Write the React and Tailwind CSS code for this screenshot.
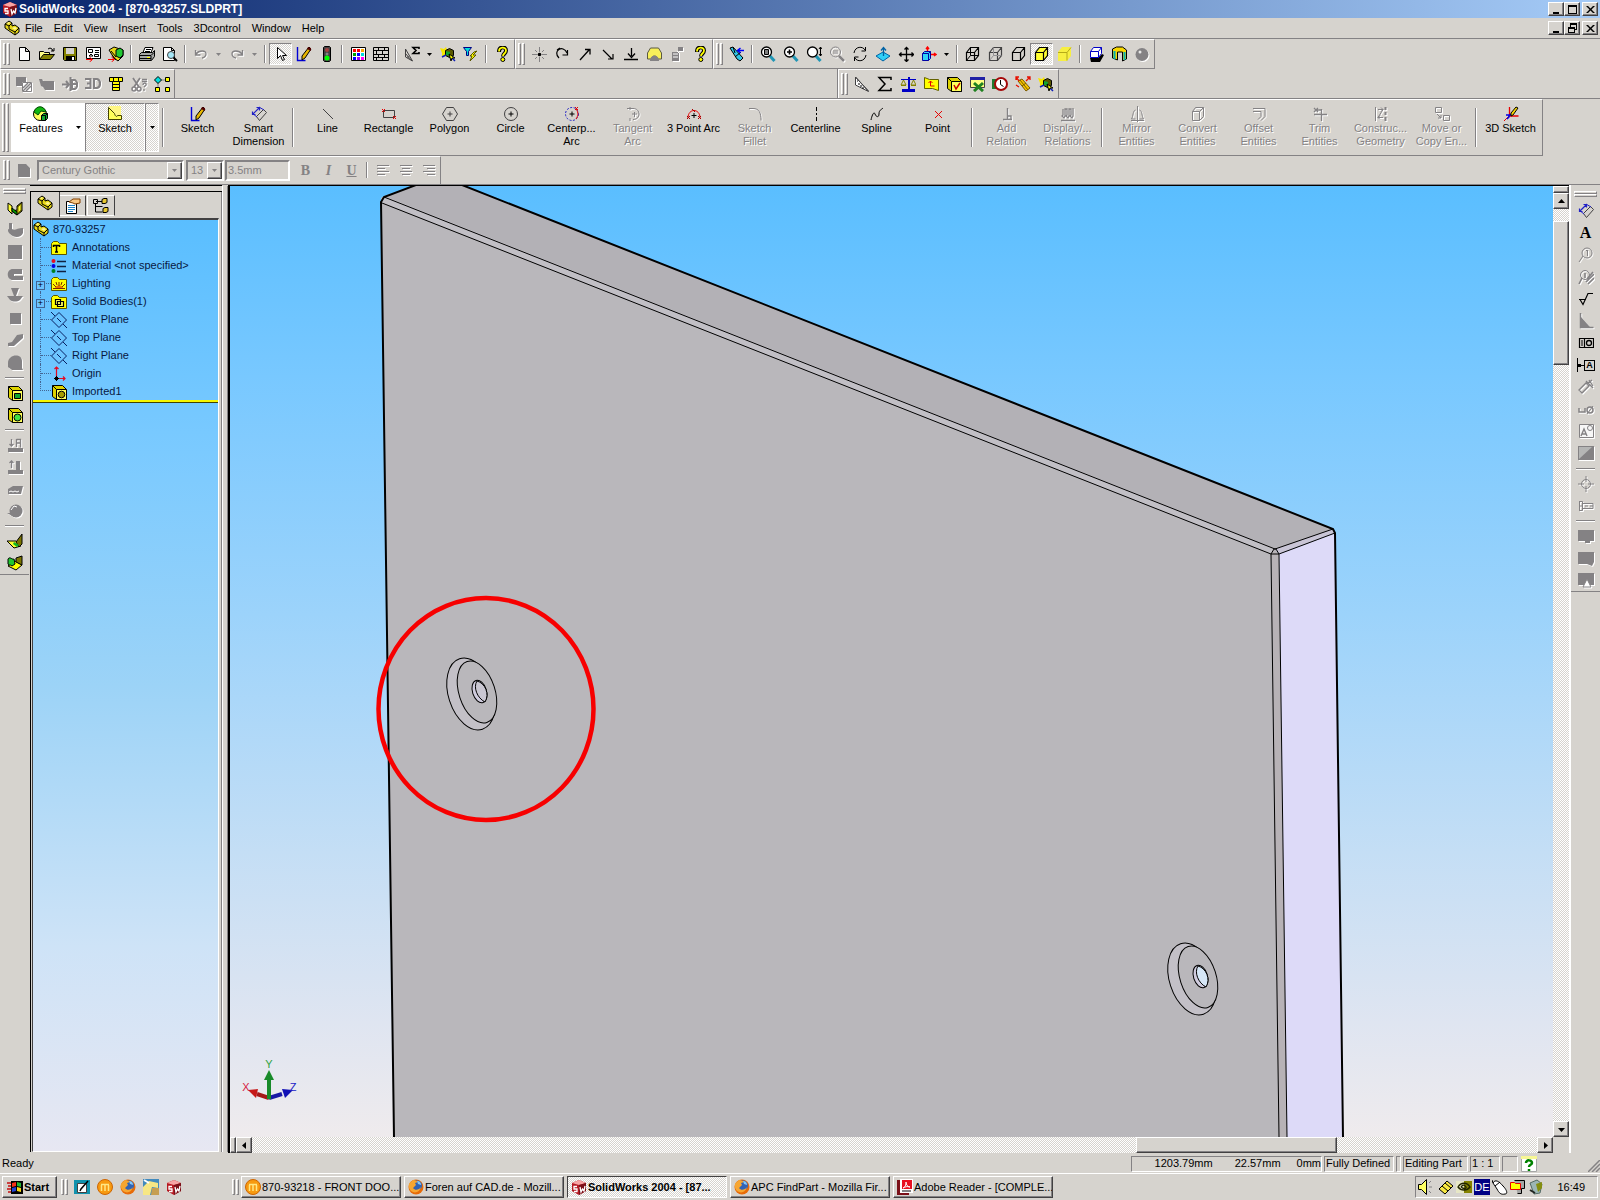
import React from 'react';

const G = '#848284';
const Y = '#ffff00';

const P = ({ d, f = 'none', s = '#000', w = 1 }) => <path d={d} fill={f} stroke={s} strokeWidth={w} />;
const F = ({ d, c }) => <path d={d} fill={c} />;

const magnifier = (
    <>
        <P d="M10 10l4.500 5" s="#2196b5" w={3} />
        <circle cx="6.500" cy="6" r="5" fill="#fff" stroke="#000" strokeWidth="1.300" />
    </>
);

const cube = (fill, stroke, hidden) => (
    <>
        <P d="M1.500 6.500h8v8h-8zM1.500 6.500l4-5h8v8l-4 5M9.500 6.500l4-5" f={fill} s={stroke} w={1.200} />
        {hidden && <P d="M5.500 1.500v8h8M5.500 9.500l-4 5" s={hidden} />}
    </>
);

const part = (
    <>
        <P d="M1 4l4-3 3 2v3l3-1 4 3v4l-4 3-10-7z" f="#e7d718" />
        <P d="M1 4l4 2 3-3M5 6v3l6 3 4-4M11 12v3" s="#000" />
        <F d="M3 3l2-1 1 1-2 1zM8 8l3-1 2 1-2 2z" c="#fff794" />
    </>
);

const folder = (
    <P d="M.5 14.500v-11l2-2h4l2 2h7v11z" f={Y} s="#5a5500" />
);

const plane = (
    <>
        <P d="M8 .5l7.500 7.500-7.500 7.500-7.500-7.500zM6 6l4 4" s="#082163" />
        <P d="M0 0l4 4M12 12l4 4" s="#082163" />
    </>
);

const yellowBox = (
    <>
        <P d="M1.500 1.500h10l4 4v10h-10l-4-3z" f="#ded300" />
        <P d="M5.500 5.500h10v10h-10zM1.500 1.500l4 4" f="#ffff5a" />
    </>
);

const help = (
    <>
        <P d="M5 6c0-6 7-6 7-1.500 0 3-3 3-3 6" w={4} />
        <P d="M5 5.500c0-5 7-5 7-1 0 3-3 3-3 5.500" s={Y} w={1.800} />
        <circle cx="8.800" cy="13.500" r="2" fill={Y} stroke="#000" />
    </>
);

const swCube = (
    <>
        <F d="M1 4l7-3 7 3v8l-7 4-7-4z" c="#b51821" />
        <F d="M1 4l7-3 7 3-7 2z" c="#f7a5a5" />
        <F d="M8 6l7-2v8l-7 4z" c="#7b1018" />
        <P d="M6 7.500h-3v2.500h3v2.500h-3M9 8l1 5 1.500-3 1.500 2 1-5" s="#fff" w={1.300} />
    </>
);

const firefox = (
    <>
        <circle cx="8" cy="8" r="7.500" fill="#e76b08" />
        <circle cx="9" cy="6.500" r="5" fill="#3163b5" />
        <F d="M5 1c2 0 4 1 5 2l-3 1 1 2-3 3c2 3 6 2 8-1-1 5-6 7-10 4-3-3-3-8 0-9z" c="#f7a631" />
        <F d="M9 2c3 0 4 2 4 4l-3-1z" c="#84c7f7" />
    </>
);

const orange = (
    <>
        <circle cx="8" cy="8" r="7.500" fill="#f79a10" stroke="#ce6500" />
        <P d="M4.500 12v-6M8 6v6M11.500 6v6M4 5.500h8" s="#ffe784" w={1.500} />
    </>
);

const explode = (
    <>
        <F d="M0 2l4 1 2-2 1 3 3-1-2 4 1 3-4-1-3 2v-4z" c="#f7e700" />
        <P d="M5.500 4.500l4-2 4 2v5l-4 2-4-2z" f="#5a5900" />
        <F d="M6 5l4 1v4l-4-1z" c="#10a631" />
        <P d="M2 11l4-2M12 12l3 3" s="#1020b5" w={1.500} />
        <P d="M9 8l6 4-3 0-1 3z" f={Y} />
    </>
);

const dim = (c) => (
    <>
        <P d="M5.500 10.500l7-7 3 3-7 8z" s="#424142" />
        <P d="M1.500 8.500l7-7M1.500 5.500v3h3M5.500 1.500h3v3" s={c} w={1.200} />
        <P d="M1 7l5 4M8 1l5 3" s={c} />
    </>
);

const surface = (
    <>
        <P d="M1 3l4 3v8l-4-4z" f="#ffff31" />
        <P d="M5 11l5 4 5-4v-9l-5 4v4z" f="#7b7500" />
        <P d="M5 8l5 4v3l-5-4z" f="#00a600" />
        <P d="M11 7l3-3v6l-3 3z" f="#ffff31" s="#7b7500" />
    </>
);

const ICONS = {
    sw: swCube,
    part,
    new: <P d="M3.500 1.500h6l4 4v9h-10zM9.500 1.500v4h4" f="#fff" />,
    open: (
        <>
            <P d="M.5 13.500v-8h4l1 1h5v2" f="#ffff84" />
            <P d="M.5 13.500l4-5h11l-4 5z" f="#848200" />
            <P d="M9 3l2-1 2 1 1 2M12 5h3v-3" />
        </>
    ),
    save: (
        <>
            <P d="M1.500 1.500h13v13h-12l-1-1z" f="#848200" />
            <F d="M4 2h8v6h-8z" c="#d6d3ce" />
            <F d="M4 10h9v5h-9z" c="#000" />
            <F d="M10 11h2v3h-2z" c="#fff" />
        </>
    ),
    drawing: (
        <>
            <P d="M1.500 1.500h14v11h-14z" f="#fff" />
            <P d="M3.500 3.500h4v3h-4zM10 4.500h4M10 6.500h4M9.500 8.500h4v2h-4zM4 10l2-2 2 2z" />
            <P d="M1 13.500h6M4.500 11l3 2.500-3 2.500" s="#ff0000" />
        </>
    ),
    assembly: (
        <>
            <P d="M1 4l5-3 9 3v6l-5 5-4-3z" f="#e7d718" />
            <P d="M8 4l4-2 3 2v5l-3 3-4-2z" f="#21c731" />
            <P d="M3 5l5 6M4 9l4 5" />
            <P d="M0 13.500h6M3.500 11l3 2.500-3 2.500" s="#ff0000" />
        </>
    ),
    print: (
        <>
            <P d="M4 6.500l2-5h8l-2 5" f="#fff" />
            <P d="M.5 8.500l2-2h11l2-2v6l-3 4h-12z" f="#a5a6a5" />
            <P d="M1 9.500h11l3-3M1 12.500h11M12 10v4M7 3.500h5M6 5.500h5" />
            <F d="M8 11h3v1h-3z" c={Y} />
        </>
    ),
    preview: (
        <>
            <P d="M1.500 1.500h8l3 3v10h-11zM9.500 1.500v3h3" f="#fff" />
            <circle cx="9" cy="9" r="3.500" fill="#a5e7f7" stroke="#424142" />
            <P d="M11.500 11.500l3.500 3.500" w={2} />
        </>
    ),
    undo: <P d="M2.500 4v5h5M3 8c3-4 10-4 10 0 0 2-2 4-4 4" s={G} w={1.300} />,
    redo: <P d="M13.500 4v5h-5M13 8c-3-4-10-4-10 0 0 2 2 4 4 4" s={G} w={1.300} />,
    select: <P d="M4.500 1.500v11l3-3 2 5 2-1-2-4h4z" f="#fff" />,
    sketch: (
        <>
            <P d="M1.500 1v13.500h8" s="#0000d6" w={1.400} />
            <P d="M13 1l2 2-6 9-3 2v-4z" f="#e7b600" />
            <F d="M12 1l3 1v3l-4-2z" c="#520000" />
        </>
    ),
    light: (
        <>
            <P d="M5.500.5h5l1 1v13l-1 1h-5l-1-1v-13z" f="#424142" />
            <circle cx="8" cy="4" r="2" fill="#a54142" />
            <circle cx="8" cy="8" r="1.500" fill="#848284" />
            <circle cx="8" cy="12" r="2.500" fill="#00ff00" />
        </>
    ),
    colors: (
        <>
            <P d="M1.500 1.500h14v13h-14z" f="#fff" />
            <F d="M3 3h3v3h-3zM7 3h3v3h-3z" c="#ff0000" />
            <F d="M11 3h3v3h-3z" c="#ffaa00" />
            <F d="M3 7h3v3h-3z" c="#00a600" />
            <F d="M7 7h3v3h-3zM3 11h3v3h-3z" c="#0000ff" />
            <F d="M11 7h3v3h-3z" c="#00dede" />
            <F d="M7 11h3v3h-3z" c="#9c00ff" />
            <F d="M11 11h3v3h-3z" c="#ff00ff" />
        </>
    ),
    bricks: <P d="M.5 1.500h15v13h-15zM0 4.500h15M0 8.500h15M0 11.500h15M5.500 2v2M11.500 2v2M3.500 5v3M9.500 5v3M5.500 9v2M11.500 9v2M3.500 12v2M9.500 12v2" />,
    measure: (
        <>
            <P d="M1.500 3v8l7 4-7-12M1 7l7 8M4 10v2" s="#424142" />
            <P d="M15 3v-1.500h-6l3 3-3 3h6v-1.500" w={1.600} />
        </>
    ),
    explode,
    filter: (
        <>
            <P d="M.5 1.500h8l-3 4v4h-2v-4z" f="#00dede" s="#000084" />
            <P d="M14 5l-4 4h3l-6 6 2-5h-2l4-4z" f={Y} s="#5a5500" />
        </>
    ),
    help,
    snapPoint: (
        <>
            <P d="M8.500 1v5M8.500 11v5M1 8.500h5M11 8.500h5M4 4l2 2M13 4l-2 2M4 13l2-2M13 13l-2-2" s={G} />
            <circle cx="8.500" cy="8.500" r="1.800" />
        </>
    ),
    rotArrow: <P d="M5 12c-7-7 4-14 8-5M13.500 4v5h-5M3 4l3-2" w={1.200} />,
    vecUp: <P d="M3 14l9-10M8 3.500h5v5" w={1.300} />,
    vecDown: <P d="M3 4l9 9M8 13h5v-5" w={1.200} />,
    vecDrop: <P d="M8.500 2v8M5 7.500l3.500 4 3.500-4M1 13.500h14" w={1.300} />,
    dome: (
        <>
            <P d="M1.500 13v-6l3-5h8l3 5v6h-4c0-4-6-4-6 0z" f="#f7ef5a" s="#5a5942" />
            <F d="M4 15c0-7 9-7 9 0z" c={G} />
        </>
    ),
    macro: <><F d="M3 6h7v9h-7zM9 1h5v4h-5z" c={G} /><P d="M4 8h5M4 11h5M8 5l2 2" s="#fff" /></>,
    binoc: (
        <>
            <P d="M1 2l3-1 10 11-3 3-3-2z" f="#31c7e7" />
            <P d="M4 1l2 6M6 11l6-5" />
            <P d="M9 4.500h6M11.500 2l-3 2.500 3 2.500" s="#0000ff" w={1.500} />
        </>
    ),
    zoomFit: <>{magnifier}<P d="M4.500 3.500h4v5h-4zM5 5h3M5 7h3" /></>,
    zoomIn: <>{magnifier}<P d="M6.500 3.500v5M4 6h5" w={1.600} /></>,
    zoomDyn: <>{magnifier}<P d="M14.500 1v9M13 3l1.500-2 1.500 2M13 8l1.500 2 1.500-2" /></>,
    zoomOut: <><circle cx="6.500" cy="6" r="5" fill="none" stroke={G} /><P d="M4 5h5M4 7h5" s={G} /><P d="M10 10l5 5" s={G} w={2.500} /></>,
    rotate: <P d="M2 7c1-7 9-7 11-3M13.500 1v4h-4M14 9c-1 7-9 7-11 3M2.500 15v-4h4" />,
    normal: (
        <>
            <P d="M1 10l7-4 7 4-7 5z" f="#31cff7" s="#0063a5" />
            <P d="M8.500 10v-8M6 4.500l2.500-3 2.500 3" s="#0063a5" w={1.300} />
        </>
    ),
    pan: <P d="M8.500 1v15M1 8.500h15M6.500 3.500l2-2 2 2M6.500 13.500l2 2 2-2M3.500 6.500l-2 2 2 2M13.500 6.500l2 2-2 2" w={1.300} />,
    viewCube: (
        <>
            <P d="M1.500 7.500l2-2h6v7l-2 2h-6zM1.500 7.500h6v7M7.500 7.500l2-2" f="#31cff7" s="#0000a5" />
            <P d="M6.500 5v-4M5 3l1.500-2 1.500 2M10 8.500h5M13 7l2 1.500-2 1.500" s="#ff0000" w={1.400} />
        </>
    ),
    wire: cube('none', '#000', '#000'),
    hidden: cube('none', '#424142', '#949294'),
    noHidden: cube('none', '#000'),
    shadedEdges: cube('#ffff31', '#000'),
    shaded: (
        <>
            <F d="M1 6l4-5h9v9l-4 5h-9z" c="#f7ef42" />
            <P d="M1 6.500h9v8M10 6.500l4-5" s="#b5ab18" />
        </>
    ),
    shadow: (
        <>
            <F d="M2 12h8l4-4 2 1-4 7h-9z" c="#000" />
            <P d="M2.500 5.500h8v6h-8zM2.500 5.500l3-4h8v6l-3 4M10.500 5.500l3-4" f="#fff" s="#0000c6" />
        </>
    ),
    section: (
        <>
            <P d="M1.500 3l4-2h6l4 3v9l-4 2v-9h-5v8l-5-2z" f="#f7d700" />
            <P d="M3.500 5v8M13.500 6v8" s="#00aeb5" w={2} />
        </>
    ),
    sphere: <><circle cx="8" cy="8.500" r="6.500" fill={G} /><circle cx="6" cy="6" r="1.500" fill="#e7e7e7" /></>,
    g1: <><F d="M0 1h10v9h-10z" c={G} /><F d="M6 6h10v10h-10z" c="#fff" /><P d="M6.500 6.500h9v9h-9z" s={G} /><P d="M7 15l8-8M7 12l5-5M10 15l5-5" s={G} w={1.500} /></>,
    g2: <F d="M0 3h3l1 2h11v9h-9l-2-3-2-1z" c={G} />,
    g3: <><P d="M0 8.500h7M4 5l3 3.500-3 3.500" s={G} w={2} /><P d="M8.500 1v14M10 4h3c3 2 3 7 0 9h-3zM9 8h6" s={G} w={2} /></>,
    g3d: <><P d="M0 3h5.500v9h-5.500M2 7.500h3" s={G} w={2} /><P d="M9 3h3c4 1 4 8 0 9h-3z" s={G} w={2.200} /></>,
    bolt: (
        <>
            <P d="M1.500 1.500h13v4h-13z" f="#fff700" />
            <P d="M4.500 5.500h7v9h-7zM4 8.500h8M4 11.500h8M5.500 2v3M10.500 2v3" f="#fff700" />
        </>
    ),
    scissors: (
        <>
            <P d="M2 2l6 9M9 2l-6 9" s={G} w={1.800} />
            <circle cx="3" cy="13" r="2" fill="none" stroke={G} strokeWidth="1.500" />
            <circle cx="8" cy="13" r="2" fill="none" stroke={G} strokeWidth="1.500" />
            <P d="M12 9c0-3 4-2 3 0l-2 2M13 13v2M11 3.500h5M11 5.500h5" s={G} w={1.300} />
        </>
    ),
    tree: (
        <>
            <P d="M4 4h8M4 4v9" s="#848284" />
            <P d="M4 .5l3.500 3.500-3.500 3.500-3.500-3.500z" f="#00dede" />
            <P d="M11.500 1.500h4v4h-4zM1.500 11.500h4v4h-4zM11.500 11.500h4v4h-4z" f={Y} />
        </>
    ),
    ruler: <><P d="M1.500 1v8l13 6.500zM1.500 1l13 14" f="#fff" s="#424142" /><P d="M3 5h1M5 7v2M7 9v2M9 11v2" /></>,
    sigma: <P d="M14 4v-2.500h-12l6 6.500-6 6.500h12v-2.500" w={1.500} />,
    scales: (
        <>
            <F d="M2 13h13v3h-13zM8 1h2v13h-2zM1 3h15v1h-15z" c="#0000c6" />
            <P d="M1 9l2.500-5 2.500 5zM11 9l2.500-5 2.500 5zM1 9.500h5M11 9.500h5" f="#d6d3ce" s="#848200" />
        </>
    ),
    check1: <><P d="M1.500 1.500l5 2h9v11l-6-2h-8z" f={Y} s="#636100" /><P d="M7.500 5v5h4M5.500 7l2-2 2 2" s="#e70000" /></>,
    check2: <>{yellowBox}<P d="M8 9l2 4 4-6" s="#c60000" w={1.500} /></>,
    excel: (
        <>
            <P d="M1.500 1.500h14v10h-14z" f="#ffff84" s="#424142" />
            <F d="M1 1h15v3h-15z" c="#2121a5" />
            <P d="M5 7l9 8M14 7l-9 8" s="#218221" w={3} />
        </>
    ),
    clock: (
        <>
            <F d="M0 3h6v10h-6z" c="#217b31" />
            <circle cx="9" cy="8" r="6" fill="#fff" stroke="#a50808" strokeWidth="2" />
            <P d="M8.500 4v4.500l3 2" />
        </>
    ),
    paths: (
        <>
            <P d="M3 5l8 10 4-3-8-9z" f="#f7c700" s="#7b5900" />
            <P d="M5 4l8 10M7 10l4-3" s="#7b5900" />
            <P d="M1 1l3 4M1 4v-3h3M15 1l-4 4M15 4v-3h-3M1 9l3 2" s="#e71000" w={1.300} />
        </>
    ),
    // command manager
    features: (
        <>
            <circle cx="7" cy="8" r="6.500" fill="#ffff5a" stroke="#000" />
            <P d="M1 6c2-7 10-7 12 0l-5-1-3 4z" f="#10b610" s="#004a00" />
            <P d="M8.500 9.500l2-2h4v5l-2 2h-4zM8.500 9.500h4v5M12.500 9.500l2-2" f="#10a631" />
        </>
    ),
    sketchTab: (
        <>
            <F d="M2 0h12v12h-12z" c="#fff784" />
            <P d="M1.500 1.500v12h13v-4h-4c0 1-2 2-3-2l-6-6" f="#ffff5a" s="#424100" />
        </>
    ),
    dimBlue: dim('#2121c6'),
    line: <P d="M3 3l10 10" s="#424142" />,
    rect: <><P d="M2.500 4.500h11v7h-11z" s="#424142" /><P d="M1 3l3 3M1 6l3-3M12 10l3 3M12 13l3-3" s="#e70000" /></>,
    polygon: <P d="M4.500 1.500h7l4 6.500-4 6.500h-7l-4-6.500zM8 5.500v5M5.500 8h5" s="#424142" />,
    circle: <><circle cx="8" cy="8" r="6.500" fill="none" stroke="#424142" /><P d="M8 5.500v5M5.500 8h5" /></>,
    centerArc: (
        <>
            <circle cx="8" cy="8" r="6.500" fill="none" stroke="#2121c6" strokeDasharray="2 1.500" />
            <P d="M12 3c3 4 2 7 0 10M11 1l3 3M14 1l-3 3" s="#e70000" />
            <P d="M8 5.500v5M5.500 8h5" />
        </>
    ),
    tangentArc: <P d="M2 2.500h6c8 0 8 11 0 11M5 1v3M5 12v3M7 8h5M9.500 6v5" s={G} />,
    pointArc: <><P d="M2 12c0-10 12-10 12 0" s="#e70000" /><P d="M1 10l3 3M1 13l3-3M12 10l3 3M12 13l3-3M6 3l3 3" s="#a50000" /><P d="M8 7v5M5.500 9.500h5" /></>,
    fillet: <P d="M2 2.500h4c6 0 8 4 8 12" s={G} />,
    centerline: <P d="M8.500 1v4M8.500 7v2M8.500 11v4" />,
    spline: <P d="M2 14c1-5 3-9 4-6s4 4 4 0 2-4 4-6" />,
    point: <P d="M5 5l7 7M12 5l-7 7" s="#e70000" />,
    addRel: <P d="M8.500 2v11M4 13.500h9M9 10h3v3" s={G} w={1.400} />,
    dispRel: <P d="M3 3v6l-1 1 2 2 1-2v-7h2v6l-1 1 2 2 1-2v-7h2v6l-1 1 2 2 1-2v-8M1 14.500h14" s={G} w={1.300} />,
    mirror: <P d="M8.500 0v16M6.500 4c-3 1-2 6-4 9h4M10.500 4c3 1 2 6 4 9h-4M2 14.500h13" s={G} />,
    convert: <P d="M2.500 5.500h7v9h-7zM2.500 5.500l3-4h8v9l-4 4M9.500 5.500l4-4" s={G} />,
    offset: <P d="M2 2.500h12v8l-4 4M2 5.500h8v5l-3 3" s={G} />,
    trim: <P d="M2 8.500h13M9.500 3v12M2 2l4 4M6 2l-4 4M5 4h4" s={G} w={1.300} />,
    construct: <><P d="M2.500 1v14M5 3.500h5M8 1.500l2 2-2 2M10 3.500l-5 8h5M7 9.500l-2 2 2 2" s={G} /><P d="M12.500 1v3M12.500 6v3M12.500 11v4" s={G} w={2} /></>,
    move: <P d="M1.500 1.500h6v5h-6zM9.500 9.500h6v5h-6zM3 8l4 4M4 12h3v-3" s={G} />,
    sketch3d: (
        <>
            <P d="M6.500 1v9h9" s="#e70000" w={1.300} />
            <P d="M6 10l-5 5" s="#e70000" />
            <P d="M3 9h3v2l-2 2M8 8l-2 2" s="#0000e7" w={1.500} />
            <P d="M13 1l2 1-5 7-2 1v-3z" f="#f7d700" />
        </>
    ),
    // formatting
    note: <F d="M2 2h8l4 4v9h-12z" c={G} />,
    alignL: <P d="M2 3.500h12M2 6.500h8M2 9.500h12M2 12.500h8" s={G} />,
    alignC: <P d="M2 3.500h12M4 6.500h8M2 9.500h12M4 12.500h8" s={G} />,
    alignR: <P d="M2 3.500h12M6 6.500h8M2 9.500h12M6 12.500h8" s={G} />,
    // feature bar
    surf: surface,
    revolve: <F d="M2 1h3v6c3 2 5-1 11-1v5c-2 5-9 5-13 1-3-3-2-5-1-5z" c={G} />,
    square: <F d="M1 1h14v14h-14z" c={G} />,
    sweep: <F d="M15 3h-9c-7 0-7 11 0 11h10v-4h-9v-2h8z" c={G} />,
    loft: <F d="M4 0h8l-3 8h7l-3 4c-3 2-7 2-10 0l-3-4h7z" c={G} />,
    smallSquare: <F d="M3 3h11v11h-11z" c={G} />,
    stair: <F d="M16 2v4l-9 8h-6v-3l4-1 5-7z" c={G} />,
    blob: <F d="M1 9c0-9 14-10 14-2v7l1 2h-11l-4-3z" c={G} />,
    cutBox: <>{yellowBox}<P d="M7.500 8.500h6v5h-6z" f="#10a631" /></>,
    cutHole: <>{yellowBox}<circle cx="10.500" cy="10.500" r="3.500" fill="#42df42" stroke="#000" /></>,
    ref1: <><F d="M1 11h15v4h-15z" c={G} /><P d="M4.500 2v7M2.500 7l2 2 2-2M9.500 2v8M9.500 2.500h4v8M9.500 6h4" s={G} w={1.300} /></>,
    ref2: <><F d="M1 11h8v-9h4v9h3v4h-15z" c={G} /><P d="M4.500 2v7M2.500 4l2-2 2 2" s={G} w={1.300} /></>,
    ref3: <><F d="M1 13v-5l5-3h10l-2 8z" c={G} /><P d="M2 11l2-1 2 1 2-1 2 1 2-1" s="#fff" /></>,
    ref4: <><circle cx="9" cy="8" r="6.500" fill={G} /><F d="M0 10h7v4z" c={G} /><P d="M4 7l3-4 3 1" s="#fff" /></>,
    flat: <><P d="M0 8h9l5 5-7 2z" f="#ffff31" /><P d="M9 9l6-8v10l-3 3z" f="#7b7500" /><F d="M7 9l5 3-2 2-4-3z" c="#10b621" /></>,
    flat2: <><P d="M1 11l7-5 7 4-6 5z" f={Y} /><P d="M1 4c2-3 4 1 6 0l1 5-3 2c-2-2-3 0-4-2z" f="#21c731" /><P d="M9 3l6-2v9l-6-3z" f="#7b7500" /></>,
    // annotation bar
    balloon: <><circle cx="9" cy="6" r="5" fill="none" stroke={G} /><P d="M5 9l-4 6M9.500 3v6M8 4l1-1" s={G} /></>,
    balloons: <><circle cx="7" cy="6" r="4.500" fill="none" stroke={G} /><P d="M4 9l-3 6M7 4v5M8 13l8-8M10 15l6-6M9 10l6-7" s={G} w={1.600} /></>,
    finish: <P d="M1 8.500h7M2 8.500l3 5 5-11h5" w={1.200} />,
    weld: <><P d="M2.500 0v14.500h13" s={G} w={1.500} /><F d="M3 4l9 10h-9z" c={G} /></>,
    geotol: <><P d="M1.500 3.500h14v9h-14zM6.500 3v9M3 6h2M3 8h2M3 10h2" w={1.200} /><circle cx="11" cy="8" r="2.500" fill="none" stroke="#000" strokeWidth="1.300" /></>,
    hatchDim: <><P d="M1 11l7-7 3 3-7 7zM8 2l7 7M11 1l4 6M9 5l5-4" s={G} w={1.300} /></>,
    holeCall: <><P d="M1 7v4h6v-4" s={G} w={1.500} /><circle cx="12" cy="9" r="3" fill="none" stroke={G} strokeWidth="1.500" /><P d="M9 13l6-8" s={G} /></>,
    area: <><P d="M1.500 1.500h14v13h-14z" f="#f7f7f7" s={G} /><circle cx="12" cy="5" r="2.500" fill="none" stroke={G} /><P d="M3 13l3-7 3 7M4 11h4" s={G} w={1.400} /></>,
    hatch: <><F d="M0 1h16v14h-16z" c={G} /><F d="M1 2h13l-13 12z" c="#b5b6b5" /></>,
    centerMark: <><circle cx="8" cy="8" r="4.500" fill="none" stroke={G} /><P d="M8 0v6M8 10v6M0 8h6M10 8h6" s={G} /></>,
    cylinder: <P d="M1.500 3v10M1.500 3.500h3v9h-3M4 5.500h11v5h-11M2 8h3M7 8h3M12 8h3" s={G} />,
    block1: <F d="M0 2h16v11h-4v2h-5v-2h-7z" c={G} />,
    block2: <F d="M0 2h16v10l-2 4-5-2h-9z" c={G} />,
    block3: <><F d="M0 1h16v12h-16z" c={G} /><P d="M9 7l4 8h-8z" f="#fff" s={G} /></>,
    // tree
    property: (
        <>
            <P d="M1.500 3.500h10v12h-10z" f="#fff" />
            <P d="M3 7.500h7M3 9.500h7M3 11.500h7M3 13.500h5" s="#2184c6" />
            <P d="M4 4l4-3h7v4l-5 1-2-1z" f="#f7c784" s="#844100" />
        </>
    ),
    config: (
        <>
            <P d="M.5 1.500h4v4h-4zM2.500 6v8h7M3 3.500h6M2.500 8.500h7" />
            <P d="M9 1.500l2-1h3v4l-2 1h-3zM10 10.500l2-1h3v4l-2 1h-3z" f="#e7c731" />
        </>
    ),
    material: (
        <>
            <P d="M6 3.500h9M6 8.500h9M6 13.500h9" s="#102142" w={1.300} />
            <circle cx="2.500" cy="3" r="2" fill="#e71021" />
            <circle cx="2.500" cy="8" r="2" fill="#0000e7" />
            <circle cx="2.500" cy="13" r="2" fill="#008221" />
        </>
    ),
    annotations: <>{folder}<P d="M2 5.500h7M5.500 5v7M4 12h3M2.500 5v2M8.500 5v2" w={1.500} /></>,
    lighting: <>{folder}<F d="M4 13c0-5 8-5 8 0z" c="#e77300" /><P d="M2 8l3 3M8 6v4M14 8l-3 3M5 6l1 3M11 6l-1 3M2 12.500h12" s="#7b2900" /></>,
    bodies: <>{folder}<P d="M4.500 5.500h5v5h-5zM6.500 7.500h6v5h-6z" f="#ffff5a" w={1.200} /></>,
    plane,
    origin: (
        <>
            <P d="M5.500 12v-11M3.500 3l2-2 2 2M6 12.500h8M12 10.500l2 2-2 2" s="#e70821" w={1.200} />
            <P d="M5.500 10v5M3 12.500h5M4 11l3 3M7 11l-3 3" />
        </>
    ),
    imported: <>{yellowBox}<circle cx="10.500" cy="10.500" r="3.300" fill="#a59a00" stroke="#000" /></>,
    // taskbar
    windows: (
        <>
            <P d="M0 4h4M1 7h3M0 10h4M1 13h3" s="#c61010" w={1.500} />
            <F d="M4 2h12v13h-12z" c="#000" />
            <F d="M5 4l4-1v4l-4 1z" c="#f73118" />
            <F d="M10 3l4 1v4l-4-1z" c="#21b631" />
            <F d="M5 9l4-1v4l-4 1z" c="#2142d6" />
            <F d="M10 8l4 1v4l-4-1z" c="#f7d718" />
        </>
    ),
    desktop: (
        <>
            <F d="M0 1h16v14h-16z" c="#1092ad" />
            <P d="M3.500 4.500h9v9h-9z" f="#fff" s="#424142" />
            <P d="M14 2l-7 8-1 2" s="#000" w={1.500} />
        </>
    ),
    sun: <><F d="M0 0h16v16h-16z" c="#428abd" /><F d="M0 8l6-6 9 2v5l-6-1-2 8h-7z" c="#f7e784" /><F d="M9 9h7v7h-8z" c="#c69e52" /><P d="M1 1l5 3" s="#fff" w={2} /></>,
    firefox,
    orange,
    adobe: (
        <>
            <F d="M0 1h12v15h-12z" c="#7b1018" />
            <F d="M3 0h13v14h-13z" c="#fff" />
            <F d="M5 1h10v9h-10z" c="#e71021" />
            <P d="M6 9c3-1 3-5 3-6 0 3 2 5 4 5-3-1-5 0-7 1z" s="#fff" />
            <P d="M5 12h9" s={G} w={2} />
        </>
    ),
    helpDoc: <><P d="M.5 1.500h15v14h-15z" f="#fff" s="#a5a6a5" /><F d="M0 0h16v3h-16z" c="#f7f794" /><P d="M5 7c0-4 6-3 6 0 0 2-3 1-3 4M8 13v2" s="#008200" w={2.500} /></>,
    speaker: <><P d="M1.500 5.500h3l5-5v15l-5-5h-3z" f="#ffff63" /><P d="M12 4l2-2M12 8h3M12 12l2 2" s={G} /></>,
    eraser: <P d="M1 10l8-8 6 5-8 8zM4 7l6 5M7 4l6 5" f="#f7e742" />,
    nvidia: <><F d="M0 2h16v12h-16z" c="#848200" /><F d="M0 2h8v12h-8z" c="#e7e7c6" /><P d="M2 8c3-5 9-5 12 0-3 4-9 4-12 0zM5 8c2-3 4-2 5 0s-3 2-5 0" s="#212400" w={1.300} /></>,
    mouse: <P d="M1 4c2-4 6-2 10 3 4 4 5 8 2 8-4 1-6-1-8-5zM3 7l5-4M1 4l-1-3" f="#fff" />,
    folders: <><P d="M4.500 1.500h10v8h-3v5h-4" f="#a5a6a5" /><P d="M.5 3.500h4l1 1h5v6h-10z" f={Y} s="#e70000" /></>,
    recycle: <><P d="M2 4l7-3 5 4-2 9-6 1z" f="#9cb6b5" s="#526963" /><F d="M8 5l6-2v6l-4 4z" c="#848e10" /><P d="M2 11l5 3" s="#212421" w={2} /></>,
};

const Icon = ({ name, off }) => (
    <svg viewBox="0 0 16 16" aria-hidden="true" className={off ? 'h-4 w-4 shrink-0 drop-shadow-[1px_1px_0_#fff]' : 'h-4 w-4 shrink-0'}>
        {ICONS[name]}
    </svg>
);

const Caret = ({ off }) => (
    <svg viewBox="0 0 5 3" aria-hidden="true" className="h-[3px] w-[5px] shrink-0">
        <path d="M0 0h5l-2.500 3z" fill={off ? G : '#000'} />
    </svg>
);

const CHECK = 'bg-[repeating-conic-gradient(#fff_0_25%,#d6d3ce_0_50%)] bg-[length:2px_2px]';
const RAISED = 'border border-t-white border-l-white border-r-[#424142] border-b-[#424142] shadow-[inset_-1px_-1px_0_#848284] bg-[#d6d3ce]';
const SUNK = 'border border-t-[#848284] border-l-[#848284] border-r-white border-b-white';

const Grip = () => (
    <div className="flex w-[11px] shrink-0 items-center justify-center gap-px self-stretch py-[3px]">
        <div className="w-[3px] self-stretch border border-t-white border-l-white border-r-[#848284] border-b-[#848284]" />
        <div className="w-[3px] self-stretch border border-t-white border-l-white border-r-[#848284] border-b-[#848284]" />
    </div>
);

const Sep = () => (
    <div className="flex w-2 shrink-0 justify-center self-stretch py-[5px]">
        <div className="w-[2px] border-l border-r border-l-[#848284] border-r-white" />
    </div>
);

const HSep = ({ tall }) => (
    <div className={tall ? 'flex h-[9px] w-full items-center px-[5px]' : 'flex h-2 w-full items-center px-[5px]'}>
        <div className="h-[2px] w-full border-t border-b border-t-[#848284] border-b-white" />
    </div>
);

// "|" separator, "v" drop-down arrow, "-name" disabled, "*name" pressed
const Tool = ({ id }) => {
    if (id === '|') return <Sep />;
    if (id === 'v' || id === '-v') {
        return (
            <button aria-label="More" className="flex h-[22px] w-[13px] shrink-0 items-center justify-center">
                <Caret off={id === '-v'} />
            </button>
        );
    }
    const off = id[0] === '-';
    const pressed = id[0] === '*';
    const name = off || pressed ? id.slice(1) : id;
    return (
        <button
            aria-label={name}
            disabled={off}
            className={`flex h-[22px] w-[23px] shrink-0 items-center justify-center ${pressed ? SUNK + ' ' + CHECK : ''}`}
        >
            <Icon name={name} off={off} />
        </button>
    );
};

const Toolbar = ({ items, className = '' }) => (
    <div className={`flex items-center border-t border-r border-b border-l border-t-white border-r-[#848284] border-b-[#848284] border-l-white pr-px ${className}`}>
        <Grip />
        {items.map((id, i) => <Tool key={i} id={id} />)}
    </div>
);

const standard = ['new', 'open', 'save', 'drawing', 'assembly', '|', 'print', 'preview', '|', '-undo', '-v', '-redo', '-v', '|',
    '*select', 'sketch', 'light', '|', 'colors', 'bricks', '|', 'measure', 'v', 'explode', 'filter', '|', 'help'];
const snaps = ['snapPoint', 'rotArrow', 'vecUp', 'vecDown', 'vecDrop', 'dome', '-macro', 'help'];
const views = ['binoc', '|', 'zoomFit', 'zoomIn', 'zoomDyn', '-zoomOut', 'rotate', 'normal', 'pan', 'viewCube', 'v', '|',
    'wire', 'hidden', 'noHidden', '*shadedEdges', 'shaded', '|', 'shadow', 'section', '-sphere'];
const control = ['-g1', '-g2', '-g3', '-g3d', 'bolt', '-scissors', 'tree'];
const toolsBar = ['ruler', 'sigma', 'scales', 'check1', 'check2', 'excel', 'clock', 'paths', 'explode'];

const commands = [
    ['sketch', 'Sketch'],
    ['dimBlue', 'Smart', 'Dimension'],
    null,
    ['line', 'Line'],
    ['rect', 'Rectangle'],
    ['polygon', 'Polygon'],
    ['circle', 'Circle'],
    ['centerArc', 'Centerp...', 'Arc'],
    ['-tangentArc', 'Tangent', 'Arc'],
    ['pointArc', '3 Point Arc'],
    ['-fillet', 'Sketch', 'Fillet'],
    ['centerline', 'Centerline'],
    ['spline', 'Spline'],
    ['point', 'Point'],
    null,
    ['-addRel', 'Add', 'Relation'],
    ['-dispRel', 'Display/...', 'Relations'],
    null,
    ['-mirror', 'Mirror', 'Entities'],
    ['-convert', 'Convert', 'Entities'],
    ['-offset', 'Offset', 'Entities'],
    ['-trim', 'Trim', 'Entities'],
    ['-construct', 'Construc...', 'Geometry'],
    ['-move', 'Move or', 'Copy En...'],
    null,
    ['sketch3d', '3D Sketch'],
];

const Command = ({ item }) => {
    if (!item) return <Sep />;
    const off = item[0][0] === '-';
    return (
        <button
            disabled={off}
            className={`flex w-[61px] shrink-0 flex-col items-center pt-[3px] leading-[13px] whitespace-nowrap ${off ? 'text-[#848284] [text-shadow:1px_1px_0_#fff]' : ''}`}
        >
            <Icon name={off ? item[0].slice(1) : item[0]} off={off} />
            <span>{item[1]}</span>
            {item[2] && <span>{item[2]}</span>}
        </button>
    );
};

const CommandManager = () => (
    <div className="flex h-[57px] w-fit border-t border-r border-b border-t-white border-r-[#848284] border-b-[#848284] pr-px">
        <Grip />
        <div className="my-[3px] flex">
            <button className="flex w-[60px] flex-col items-center bg-white pt-[3px] leading-[13px]">
                <Icon name="features" />
                Features
            </button>
            <button aria-label="Features list" className="flex w-[14px] justify-center bg-white pt-[23px]"><Caret /></button>
            <button className={`flex w-[60px] flex-col items-center pt-[2px] leading-[13px] ${SUNK} ${CHECK}`}>
                <Icon name="sketchTab" />
                Sketch
            </button>
            <button aria-label="Sketch list" className={`flex w-[14px] justify-center pt-[22px] ${SUNK} ${CHECK}`}><Caret /></button>
            <Sep />
            {commands.map((item, i) => <Command key={i} item={item} />)}
        </div>
    </div>
);

const Combo = ({ label, value, className }) => (
    <div className={`relative h-[21px] shrink-0 border-2 border-t-[#848284] border-l-[#848284] border-r-white border-b-white ${className}`}>
        <select aria-label={label} disabled className="block h-[17px] w-full appearance-none pl-[3px] leading-[15px] text-[#848284] opacity-100">
            <option>{value}</option>
        </select>
        <span className={`pointer-events-none absolute top-0 right-0 flex h-[17px] w-[15px] items-center justify-center ${RAISED}`}>
            <Caret off />
        </span>
    </div>
);

const FormatBar = () => (
    <div className="flex h-[28px] w-fit items-center border-t border-r border-t-white border-r-[#848284] pb-px pl-px">
        <Grip />
        <Tool id="-note" />
        <Combo label="Font" value="Century Gothic" className="ml-[2px] w-[147px]" />
        <Combo label="Font size" value="13" className="ml-[2px] w-[38px]" />
        <input
            aria-label="Text height"
            disabled
            defaultValue="3.5mm"
            className="ml-px h-[21px] w-[65px] border-2 border-t-[#848284] border-l-[#848284] border-r-white border-b-white pl-px text-[#848284]"
        />
        <div className="ml-[4px] flex items-center font-['Liberation_Serif',serif] text-[14px] font-bold text-[#848284] [text-shadow:1px_1px_0_#fff]">
            <button disabled className="w-[23px]">B</button>
            <button disabled className="w-[23px] italic">I</button>
            <button disabled className="w-[23px] underline">U</button>
        </div>
        <Sep />
        <Tool id="-alignL" />
        <Tool id="-alignC" />
        <Tool id="-alignR" />
    </div>
);

const winGlyphs = {
    Minimize: <path d="M2 8h6v2h-6z" />,
    Maximize: <path d="M1 1h9v9h-9zM2 3v6h7v-6z" fillRule="evenodd" />,
    Restore: <path d="M3 0h7v7h-2v3h-7v-6h2zM4 2v2h4v2h1v-4zM2 6v3h5v-3z" fillRule="evenodd" />,
    Close: <path d="M1 2h2l2.500 2.500 2.500-2.500h2l-3.500 3.500 3.500 3.500h-2l-2.500-2.500-2.500 2.500h-2l3.500-3.500z" />,
};

const WinButton = ({ name }) => (
    <button aria-label={name} className={`flex h-[14px] w-4 items-center justify-center ${RAISED}`}>
        <svg viewBox="0 0 11 11" className="h-[11px] w-[11px]" aria-hidden="true">{winGlyphs[name]}</svg>
    </button>
);

const WinButtons = ({ middle }) => (
    <div className="ml-auto flex pr-[2px]">
        <WinButton name="Minimize" />
        <WinButton name={middle} />
        <div className="w-[2px]" />
        <WinButton name="Close" />
    </div>
);

const featureBar = ['surf', '-revolve', '-square', '-sweep', '-loft', '-smallSquare', '-stair', '-blob', '==', 'cutBox', 'cutHole', '=',
    '-ref1', '-ref2', '-ref3', '-ref4', '=', 'flat', 'flat2'];
const annotationBar = ['dimBlue', 'A', '-balloon', '-balloons', 'finish', '-weld', 'geotol', 'datum', '-hatchDim', '-holeCall', '-area', '-hatch', '==',
    '-centerMark', '-cylinder', '=', '-block1', '-block2', '-block3'];

const SideTool = ({ id }) => {
    if (id[0] === '=') return <HSep tall={id === '=='} />;
    if (id === 'A') return <button className="h-[22px] w-[23px] font-['Liberation_Serif',serif] text-[16px] leading-[22px] font-bold">A</button>;
    if (id === 'datum') {
        return (
            <button className="flex h-[22px] w-[23px] items-center pl-[3px]">
                <span className="h-[14px] w-px bg-black" />
                <span className="h-[3px] w-[3px] bg-black" />
                <span className="h-px w-[3px] bg-black" />
                <span className="h-[11px] w-[11px] border border-black text-center text-[9px] leading-[9px] font-bold">A</span>
            </button>
        );
    }
    return <Tool id={id} />;
};

const SideBar = ({ items, className }) => (
    <div className={`flex w-full flex-col items-center border-b border-b-[#848284] ${className}`}>
        <div className="mt-[3px] flex w-[23px] flex-col">
            <div className="h-[3px] border border-t-white border-l-white border-r-[#848284] border-b-[#848284]" />
            <div className="h-[3px] border border-t-white border-l-white border-r-[#848284] border-b-[#848284]" />
        </div>
        <div className="mt-[3px] flex w-full flex-col items-center">
            {items.map((id, i) => <SideTool key={i} id={id} />)}
        </div>
    </div>
);

const treeItems = [
    ['annotations', 'Annotations'],
    ['material', 'Material <not specified>'],
    ['lighting', 'Lighting', true],
    ['bodies', 'Solid Bodies(1)', true],
    ['plane', 'Front Plane'],
    ['plane', 'Top Plane'],
    ['plane', 'Right Plane'],
    ['origin', 'Origin'],
    ['imported', 'Imported1'],
];

const FeatureTree = () => (
    <div className="flex w-[192px] shrink-0 flex-col pb-px">
        <div className="h-[7px] border-t border-b border-t-black border-b-black" />
        <div className="flex min-h-0 flex-1 flex-col border-r border-l border-r-[#848284] border-l-black">
            <div className="flex h-[26px] shrink-0 items-start">
                <button aria-label="FeatureManager" className="flex h-[25px] w-[29px] items-center justify-center border-r border-r-[#424142] pb-[3px]"><Icon name="part" /></button>
                <button aria-label="PropertyManager" className="mt-[3px] flex h-[21px] w-[26px] items-center justify-center border-t border-r border-b border-t-white border-r-[#424142] border-b-white"><Icon name="property" /></button>
                <button aria-label="ConfigurationManager" className="mt-[3px] ml-px flex h-[21px] w-[28px] items-center justify-center border-t border-r border-b border-l border-t-white border-r-[#424142] border-b-white border-l-white"><Icon name="config" /></button>
            </div>
            <div className="mr-[2px] ml-px min-h-0 flex-1 border-t-2 border-r border-b border-l border-t-[#424142] border-r-white border-b-white border-l-[#424142] bg-[linear-gradient(#5abeff,#7bcaff_25%,#9cd3f7_50%,#cee3f7_78%,#e7e7f2)] text-[#081842]">
                <div className="flex h-[18px] items-center gap-[4px]"><Icon name="part" />870-93257</div>
                <ul className="border-b-2 border-[#f7f700] shadow-[0_1px_0_#424100]">
                    {treeItems.map(([icon, label, plus], i) => (
                        <li key={label} className="relative flex h-[18px] items-center pl-[7px]">
                            <span className={i === treeItems.length - 1 ? 'h-[9px] w-[11px] self-start border-b border-l border-dotted border-[#426594]' : 'w-[11px] self-stretch border-l border-dotted border-[#426594]'}>
                                {i < treeItems.length - 1 && <span className="block h-[10px] border-b border-dotted border-[#426594]" />}
                            </span>
                            {plus && (
                                <button aria-label={`Expand ${label}`} className="absolute top-[7px] left-[3px] h-[9px] w-[9px] border border-[#426594] bg-[#6bc3ff] text-center text-[9px] leading-[7px] text-black">+</button>
                            )}
                            <span className="mt-[2px]"><Icon name={icon} /></span>
                            <span className="ml-[5px] whitespace-nowrap">{label}</span>
                        </li>
                    ))}
                </ul>
            </div>
        </div>
    </div>
);

const Hole = ({ x, y, through }) => (
    <g transform={`translate(${x} ${y})`} stroke="#000">
        <ellipse rx="22.500" ry="37" transform="rotate(-18)" fill="#c3c0c7" />
        <ellipse cx="6" cy="-2" rx="18" ry="32" transform="rotate(-18 6 -2)" fill="#b9b7bb" />
        <ellipse cx="8.500" cy="-2.500" rx="7" ry="11.500" transform="rotate(-18 8.500 -2.500)" fill="#d0ccde" />
        <path d="M6 -13c-4 6 0 17 8 21c5-8 0-19-8-21z" fill={through} />
    </g>
);

const ModelView = () => (
    <svg viewBox="230 186 1323 951" preserveAspectRatio="xMinYMin slice" className="block h-full w-full" role="img" aria-label="Model">
        <defs>
            <linearGradient id="sky" x1="0" y1="0" x2="0" y2="1">
                <stop offset="0" stopColor="#5abeff" />
                <stop offset="0.2" stopColor="#78c8ff" />
                <stop offset="0.45" stopColor="#9cd3fb" />
                <stop offset="0.7" stopColor="#c4def5" />
                <stop offset="0.88" stopColor="#dfe5f1" />
                <stop offset="1" stopColor="#efebed" />
            </linearGradient>
        </defs>
        <rect x="230" y="186" width="1323" height="951" fill="url(#sky)" />
        <path d="M381 200l3-4 32-11h46l872 344-59 22-4 5z" fill="#b3b1b6" />
        <path d="M381 198l3-2 892 353-4 8-891-352z" fill="#c1bfc5" />
        <path d="M381 202l890 352 9 583h-886z" fill="#b9b7bb" />
        <path d="M1271 554l4-5 4 5 8 583h-8z" fill="#b7b2b6" />
        <path d="M1279 554l56-21 8 604h-56z" fill="#dddaf8" />
        <path d="M1275 549l58-20 2 4-56 21z" fill="#c9c5d6" />
        <g fill="none" stroke="#000">
            <path d="M394 1137l-13-935 3-5 32-12M462 185l871 344 2 4 8 604" strokeWidth="2" />
            <path d="M384 197l891 352 58-20M382 203l889 351h8l56-21M1271 554l3-5h2l3 5M1271 554l8 583M1279 554l8 583" />
        </g>
        <Hole x={471} y={694} through="#cac7d2" />
        <Hole x={1192} y={979} through="#d6e7f7" />
        <ellipse cx="486" cy="709" rx="107.500" ry="111" fill="none" stroke="#f70000" strokeWidth="4.500" />
        <g strokeWidth="4">
            <path d="M269 1098l-12-4" stroke="#a51818" />
            <path d="M248 1090l10-1-2 9z" fill="#c61818" stroke="none" />
            <path d="M269 1098l13-4" stroke="#1818a5" />
            <path d="M293 1090l-11-1 3 9z" fill="#1010b5" stroke="none" />
            <path d="M269 1099v-20" stroke="#188a29" />
            <path d="M269 1070l-5 10h10z" fill="#188a29" stroke="none" />
        </g>
        <g fontFamily="Liberation Sans, sans-serif" fontSize="11" textAnchor="middle">
            <text x="246" y="1091" fill="#d62142">X</text>
            <text x="269" y="1068" fill="#31a242">Y</text>
            <text x="293" y="1091" fill="#2121c6">Z</text>
        </g>
    </svg>
);

const arrows = { up: 'M0 5h7l-3.500-4z', down: 'M0 2h7l-3.500 4z', left: 'M5 0v7l-4-3.500z', right: 'M2 0v7l4-3.500z' };

const ScrollButton = ({ dir }) => (
    <button aria-label={`Scroll ${dir}`} className={`flex h-4 w-4 shrink-0 items-center justify-center ${RAISED}`}>
        <svg viewBox="0 0 7 7" className="h-[7px] w-[7px]" aria-hidden="true"><path d={arrows[dir]} /></svg>
    </button>
);

const Viewport = () => (
    <div className="grid min-h-0 min-w-0 flex-1 grid-cols-[minmax(0,1fr)_16px] grid-rows-[minmax(0,1fr)_16px] border-t border-l-2 border-t-black border-l-black">
        <div className="min-h-0 overflow-hidden"><ModelView /></div>
        <div className={`flex min-h-0 flex-col ${CHECK}`}>
            <div className={`h-[7px] shrink-0 ${RAISED}`} />
            <ScrollButton dir="up" />
            <div className="flex min-h-0 flex-1 flex-col pt-[12px]">
                <div className={`h-[16%] ${RAISED}`} />
            </div>
            <ScrollButton dir="down" />
        </div>
        <div className={`flex ${CHECK}`}>
            <div className={`w-[6px] shrink-0 ${RAISED}`} />
            <ScrollButton dir="left" />
            <div className="flex flex-1 justify-end pr-[200px]">
                <div className={`w-[18.5%] ${RAISED}`} />
            </div>
            <ScrollButton dir="right" />
        </div>
        <div />
    </div>
);

const StatusBar = () => (
    <div className="flex h-5 shrink-0 items-center pt-px pl-[2px]">
        Ready
        <div className="ml-auto flex items-center gap-[2px] whitespace-nowrap">
            <div className={`flex h-4 w-[191px] items-center justify-end gap-4 ${SUNK}`}>
                <span>1203.79mm</span>
                <span className="ml-[6px]">22.57mm</span>
                <span>0mm</span>
            </div>
            <div className={`flex h-4 w-[70px] items-center pl-px ${SUNK}`}>Fully Defined</div>
            <div className={`h-4 w-[5px] ${SUNK}`} />
            <div className={`flex h-4 w-[65px] items-center pl-px ${SUNK}`}>Editing Part</div>
            <div className={`flex h-4 w-[30px] items-center pl-px ${SUNK}`}>1 : 1</div>
            <div className={`h-4 w-4 ${SUNK}`} />
            <button aria-label="Quick tips" className="flex w-[18px] justify-center"><Icon name="helpDoc" /></button>
            <svg viewBox="0 0 12 12" className="ml-[48px] h-3 w-3 self-end" aria-hidden="true">
                <path d="M0 12l12-12M4 12l8-8M8 12l4-4" stroke={G} strokeWidth="1.500" />
            </svg>
        </div>
    </div>
);

const tasks = [
    ['orange', '870-93218 - FRONT DOO...'],
    ['firefox', 'Foren auf CAD.de - Mozill...'],
    ['sw', 'SolidWorks 2004 - [87...', true],
    ['firefox', 'APC FindPart - Mozilla Fir...'],
    ['adobe', 'Adobe Reader - [COMPLE...'],
];

const TaskBar = () => (
    <div className="flex h-[27px] shrink-0 items-center border-t border-white px-[2px]">
        <button className={`flex h-[22px] w-[55px] items-center gap-px pl-[4px] font-bold ${RAISED}`}><Icon name="windows" />Start</button>
        <div className="ml-[2px] flex h-[22px]"><Grip /></div>
        <div className="flex w-[160px]">
            {['desktop', 'orange', 'firefox', 'sun', 'sw'].map((id) => <Tool key={id} id={id} />)}
        </div>
        <div className="flex h-[22px]"><Grip /></div>
        <div className="flex gap-[3px]">
            {tasks.map(([icon, label, active]) => (
                <button
                    key={label}
                    className={`flex h-[22px] w-[160px] items-center gap-px overflow-hidden pl-[3px] whitespace-nowrap ${active ? 'border border-t-[#424142] border-l-[#424142] border-r-white border-b-white font-bold ' + CHECK : RAISED}`}
                >
                    <Icon name={icon} />
                    {label}
                </button>
            ))}
        </div>
        <div className={`ml-auto flex h-[22px] w-[183px] items-center gap-[2px] pl-px ${SUNK}`}>
            <Icon name="speaker" />
            <span className="w-px" />
            <Icon name="eraser" />
            <Icon name="nvidia" />
            <span className="h-4 w-4 bg-[#000084] text-center leading-4 text-white">DE</span>
            <Icon name="mouse" />
            <Icon name="folders" />
            <Icon name="recycle" />
            <span className="ml-auto pr-[12px]">16:49</span>
        </div>
    </div>
);

const App = () => (
    <div className="flex h-screen flex-col overflow-hidden bg-[#d6d3ce] font-['Liberation_Sans',Arial,sans-serif] text-[11px] leading-[13px] text-black">
        <header className="flex h-[18px] shrink-0 items-center gap-px bg-[linear-gradient(90deg,#08246b,#a5cbf7)] pl-[2px] text-[12px] font-bold text-white">
            <Icon name="sw" />
            SolidWorks 2004 - [870-93257.SLDPRT]
            <WinButtons middle="Maximize" />
        </header>
        <nav className="flex h-[21px] shrink-0 items-center gap-[11px] border-b border-[#848284] pl-[4px]">
            <span className="-mr-[6px]"><Icon name="part" /></span>
            {['File', 'Edit', 'View', 'Insert', 'Tools', '3Dcontrol', 'Window', 'Help'].map((m) => <button key={m}>{m}</button>)}
            <WinButtons middle="Restore" />
        </nav>
        <div className="flex h-[30px] shrink-0">
            <Toolbar items={standard} />
            <Toolbar items={snaps} />
            <Toolbar items={views} />
        </div>
        <div className="flex h-[30px] shrink-0 border-b border-[#848284]">
            <Toolbar items={control} className="border-b-0" />
            <div className="w-[663px] shrink border-r border-[#848284]" />
            <Toolbar items={toolsBar} className="border-b-0" />
        </div>
        <CommandManager />
        <FormatBar />
        <main className="flex min-h-0 flex-1 border-t border-[#848284]">
            <div className="w-[29px] shrink-0"><SideBar items={featureBar} className="" /></div>
            <div className="w-px shrink-0" />
            <FeatureTree />
            <div className="my-px w-[6px] shrink-0 border-r border-l border-r-[#848284] border-l-white" />
            <Viewport />
            <div className="w-[31px] shrink-0 border-l-2 border-white"><SideBar items={annotationBar} className="pt-[3px]" /></div>
        </main>
        <StatusBar />
        <TaskBar />
    </div>
);

export default App;
